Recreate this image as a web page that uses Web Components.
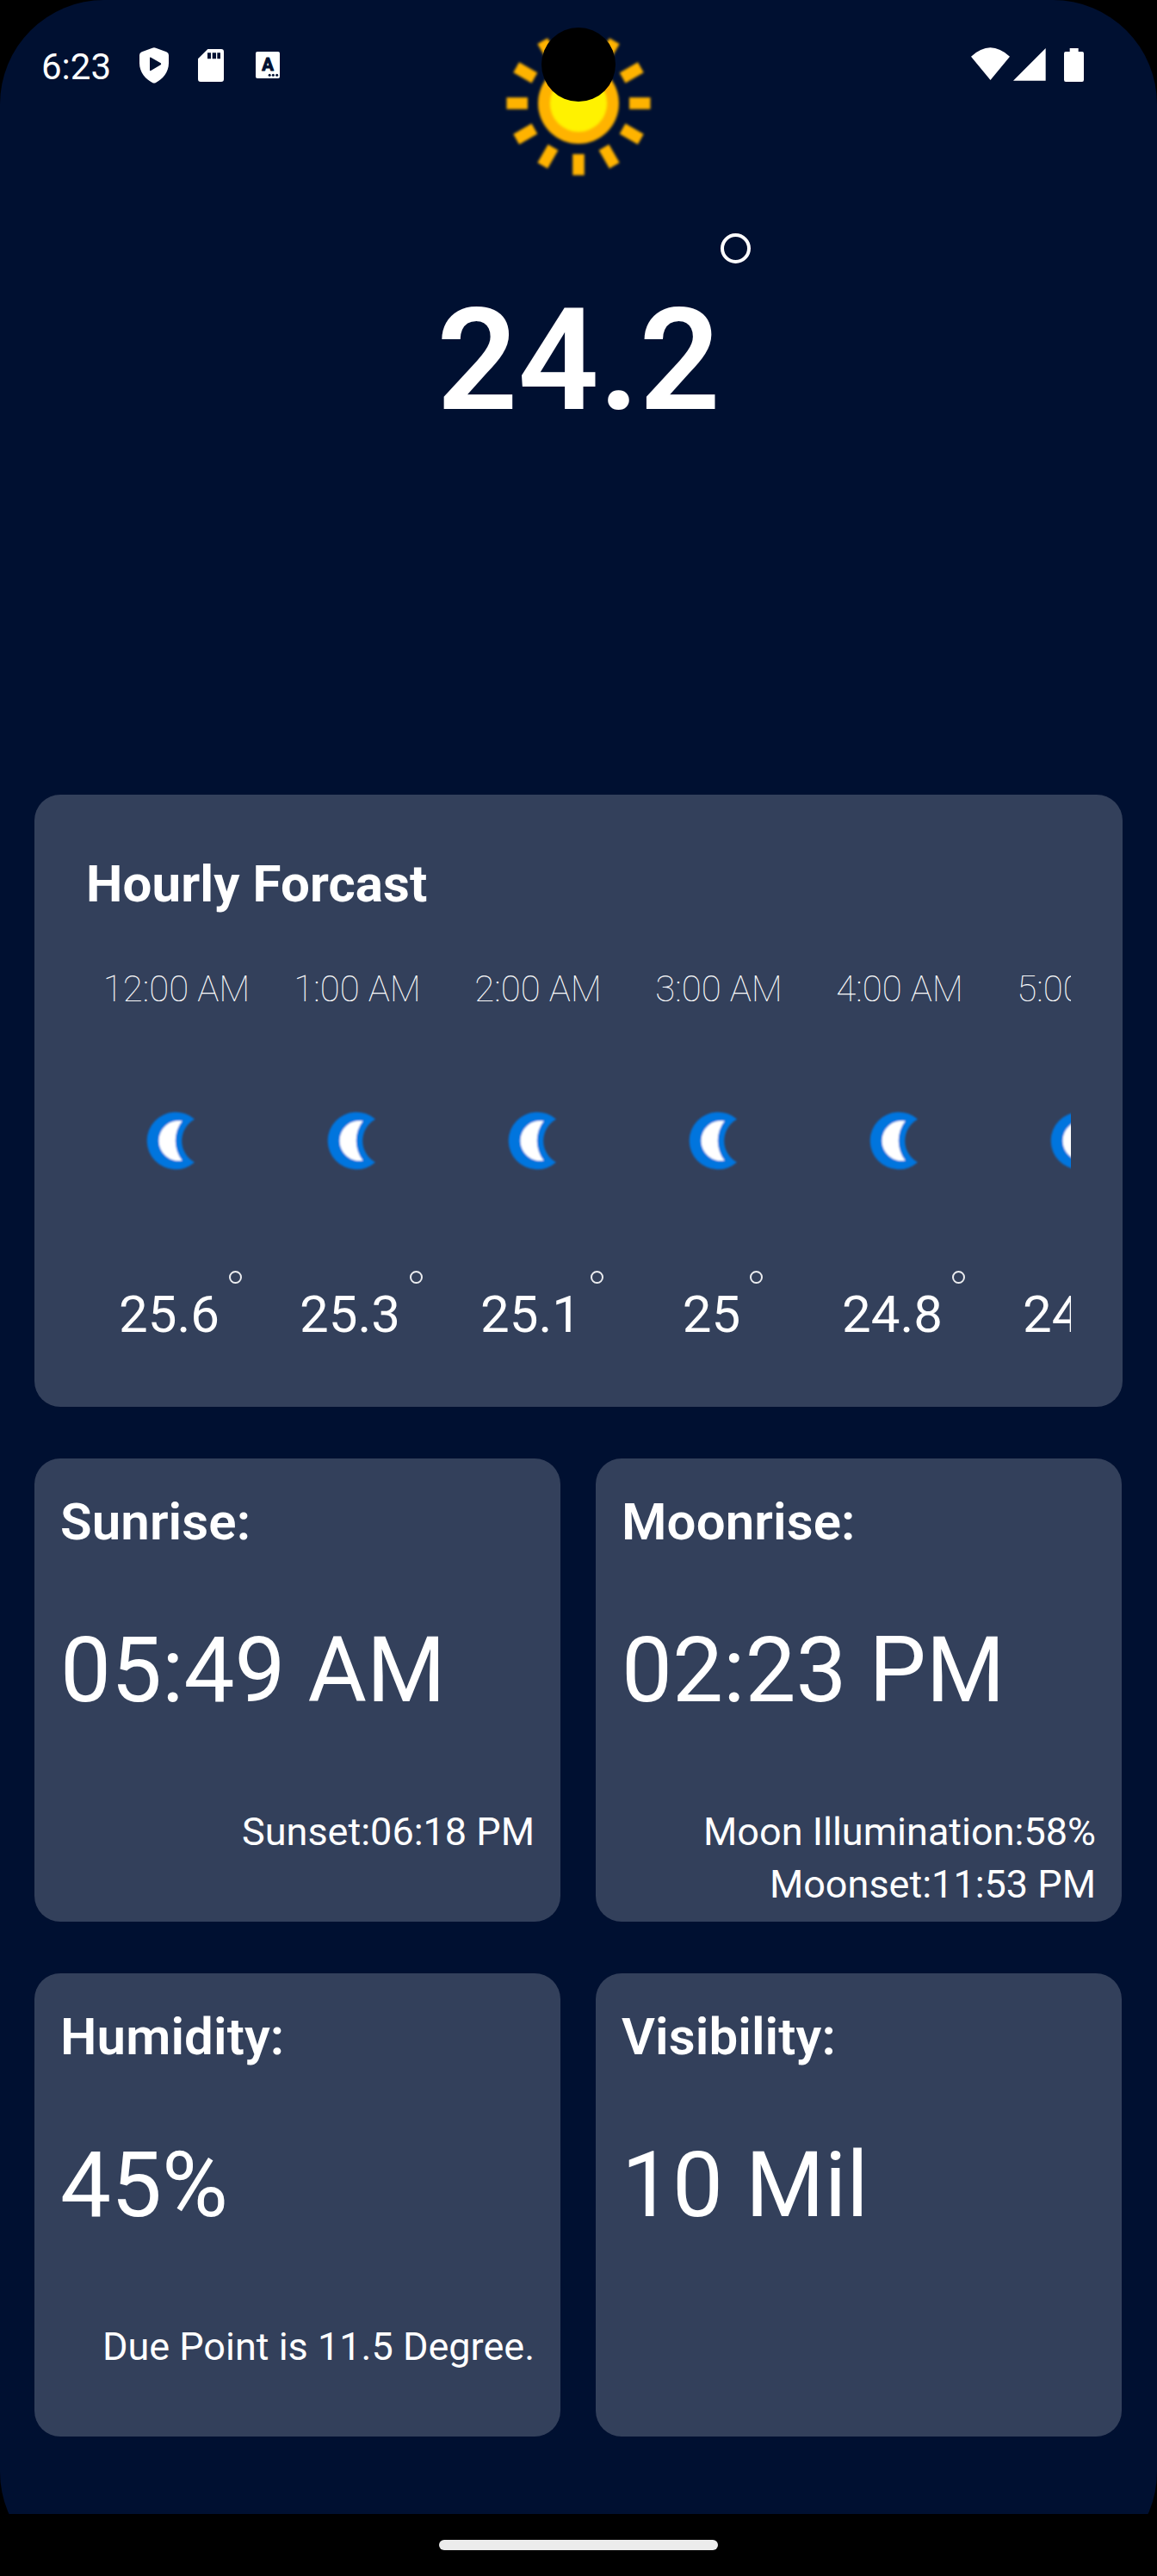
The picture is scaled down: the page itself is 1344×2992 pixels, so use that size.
<!DOCTYPE html>
<html lang="en">
<head>
<meta charset="utf-8">
<title>Weather</title>
<style>
  html, body { margin: 0; background: #000; }
  body { width: 1344px; height: 2992px; overflow: hidden; font-family: Roboto, "Noto Sans", sans-serif; color: #fff; }
</style>
</head>
<body>
<phone-screen>
  <status-bar slot="status" time="6:23"></status-bar>
  <current-weather temp="24.2"></current-weather>
  <hourly-forecast heading="Hourly Forcast">
    <hour-item time="12:00 AM" temp="25.6"></hour-item>
    <hour-item time="1:00 AM" temp="25.3"></hour-item>
    <hour-item time="2:00 AM" temp="25.1"></hour-item>
    <hour-item time="3:00 AM" temp="25"></hour-item>
    <hour-item time="4:00 AM" temp="24.8"></hour-item>
    <hour-item time="5:00 AM" temp="24.6"></hour-item>
  </hourly-forecast>
  <card-grid>
    <info-card heading="Sunrise:" value="05:49 AM"><div>Sunset:06:18 PM</div></info-card>
    <info-card heading="Moonrise:" value="02:23 PM"><div>Moon Illumination:58%</div><div>Moonset:11:53 PM</div></info-card>
    <info-card heading="Humidity:" value="45%"><div>Due Point is 11.5 Degree.</div></info-card>
    <info-card heading="Visibility:" value="10 Mil"></info-card>
  </card-grid>
</phone-screen>

<script>
  const define = (name, render) => customElements.define(name, class extends HTMLElement {
    constructor() {
      super();
      this.attachShadow({ mode: 'open' }).innerHTML = render(key => this.getAttribute(key) || '');
    }
  });

  define('phone-screen', () => `
    <style>
      :host { display: block; position: relative; height: 2992px; background: #000; }
      .clip { height: 2992px; border-radius: 121px; overflow: hidden; display: flex; flex-direction: column; }
      .app { flex: 1; background: #001031; display: flex; flex-direction: column; }
      .nav { height: 72px; background: #000; display: flex; justify-content: center; align-items: center; }
      .pill { width: 324px; height: 12px; border-radius: 6px; background: #ececec; }
      .camera { position: absolute; left: 629px; top: 32px; width: 86px; height: 86px; border-radius: 50%; background: #000; }
    </style>
    <div class="clip">
      <div class="app"><slot></slot></div>
      <div class="nav"><div class="pill"></div></div>
    </div>
    <slot name="status"></slot>
    <div class="camera"></div>`);

  define('status-bar', a => `
    <style>
      :host { position: absolute; left: 0; top: 0; width: 1344px; height: 156px; box-sizing: border-box; padding: 0 84px 0 48px;
              display: flex; justify-content: space-between; align-items: center; }
      .side { display: flex; align-items: center; }
      .time { font-size: 42px; line-height: 50px; width: 82px; margin-right: 32px; }
      svg { display: block; fill: #fff; }
    </style>
    <div class="side">
      <span class="time">${a('time')}</span>
      <svg width="34" height="42" viewBox="486 165 102 126" style="margin-right:34px;margin-top:-5px">
        <path fill-rule="evenodd" d="M531 167Q537 164 543 167L580 181Q588 184 588 192V220C588 252 566 277 543 288Q537 291 531 288C508 277 486 252 486 220V192Q486 184 494 181ZM522 202V244Q522 248 526 246L560 226Q563 223 560 220L526 200Q522 198 522 202Z"/>
      </svg>
      <svg width="30" height="38" viewBox="690 170 90 114" style="margin-right:37px;margin-top:-5px">
        <path fill-rule="evenodd" d="M724 170H771Q780 170 780 179V275Q780 284 771 284H699Q690 284 690 275V204ZM723 183V204H735V183ZM740 183V204H753V183ZM757 183V204H768V183Z"/>
      </svg>
      <svg width="28" height="31" viewBox="891 180 84 93" style="margin-top:-5px">
        <rect x="891" y="180" width="84" height="93" rx="6"/>
        <text x="933" y="247" text-anchor="middle" font-family="Roboto, sans-serif" font-weight="700" font-size="61" fill="#001031" stroke="#001031" stroke-width="3" stroke-linejoin="round">A</text>
        <g fill="#001031"><circle cx="939.500" cy="262" r="4.500"/><circle cx="952" cy="262" r="4.500"/><circle cx="965" cy="262" r="4.500"/></g>
      </svg>
    </div>
    <div class="side" style="margin-top:-6px">
      <svg width="132" height="40" viewBox="147 165 396 120">
        <path d="M147 197Q214 134 282 197L214.500 279ZM407 168V281H294ZM491 168H521V180H534Q540 180 540 186V278Q540 285 534 285H477Q471 285 471 278V186Q471 180 477 180H491Z"/>
      </svg>
    </div>`);

  define('degree-ring', () => `
    <style>
      :host { display: block; flex: none; box-sizing: border-box; width: var(--ring, 15px); height: var(--ring, 15px);
              border: var(--stroke, 2px) solid var(--ring-color, #ebecef); border-radius: 50%; }
    </style>`);

  define('current-weather', a => `
    <style>
      :host { height: 923px; box-sizing: border-box; padding-top: 24px; display: flex; flex-direction: column; align-items: center; }
      svg { display: block; flex: none; }
      .row { display: flex; align-items: flex-start; margin-top: 55px; }
      .temp { font-size: 165px; line-height: 194px; font-weight: 600; margin-top: 51px; }
      degree-ring { --ring: 35px; --stroke: 4px; --ring-color: #fff; margin: 0 -35px 0 0; }
    </style>
    <svg width="192" height="192" viewBox="-96 -96 192 192">
      <filter id="soft" x="-20%" y="-20%" width="140%" height="140%"><feGaussianBlur stdDeviation="1.700"/></filter>
      <g filter="url(#soft)">
        <circle r="47" fill="#ffb300"/><circle r="33" fill="#fff200"/>
        <g fill="#ffb300">${Array.from({ length: 12 }, (_, i) => `<rect x="59" y="-6.800" width="24.500" height="13.600" transform="rotate(${i * 30})"/>`).join('')}</g>
      </g>
    </svg>
    <div class="row"><span class="temp">${a('temp')}</span><degree-ring></degree-ring></div>`);

  define('hourly-forecast', a => `
    <style>
      :host { display: block; margin: 0 40px; height: 711px; box-sizing: border-box; padding: 69px 60px 0; border-radius: 30px; background: #33405b; }
      h2 { margin: 0; font-size: 60px; line-height: 70px; font-weight: 700; letter-spacing: 0.1px; }
      .hours { display: flex; overflow: hidden; margin-top: 62px; }
    </style>
    <h2>${a('heading')}</h2>
    <div class="hours"><slot></slot></div>`);

  define('hour-item', a => `
    <style>
      :host { flex: none; width: 210px; display: flex; flex-direction: column; align-items: center; }
      .time { font-size: 42px; line-height: 50px; font-weight: 100; white-space: nowrap; }
      svg { display: block; margin-top: 112px; }
      .temp { display: flex; align-items: flex-start; margin-top: 112px; }
      .temp span { font-size: 60px; line-height: 70px; margin-top: 16px; }
      degree-ring { margin: 0 -9px 0 11px; }
    </style>
    <span class="time">${a('time')}</span>
    <svg width="78" height="78" viewBox="-39 -39 78 78">
      <filter id="soft" x="-20%" y="-20%" width="140%" height="140%"><feGaussianBlur stdDeviation="0.800"/></filter>
      <g filter="url(#soft)">
        <path fill="#0074de" d="M21 -25A33.300 33.300 0 1 0 21 25A28.500 28.500 0 0 1 21 -25Z"/>
        <path fill="#fff" d="M6.500 -23A23.300 23.300 0 1 0 6.500 23A38 38 0 0 1 6.500 -23Z"/>
      </g>
    </svg>
    <div class="temp"><span>${a('temp')}</span><degree-ring></degree-ring></div>`);

  define('card-grid', () => `
    <style>
      :host { display: grid; grid-template-columns: 611px 611px; grid-auto-rows: 538px; column-gap: 41px; row-gap: 60px; margin: 60px 40px 0; }
    </style>
    <slot></slot>`);

  define('info-card', a => `
    <style>
      :host { display: flex; flex-direction: column; box-sizing: border-box; padding: 39px 30px 0; border-radius: 30px; background: #33405b; }
      h3 { margin: 0; font-size: 60px; line-height: 70px; font-weight: 600; letter-spacing: 0.1px; }
      .value { font-size: 105px; line-height: 124px; margin-top: 76px; }
      .notes { font-size: 45px; line-height: 61px; margin-top: 94px; text-align: right; white-space: nowrap; }
    </style>
    <h3>${a('heading')}</h3>
    <div class="value">${a('value')}</div>
    <div class="notes"><slot></slot></div>`);
</script>
</body>
</html>
